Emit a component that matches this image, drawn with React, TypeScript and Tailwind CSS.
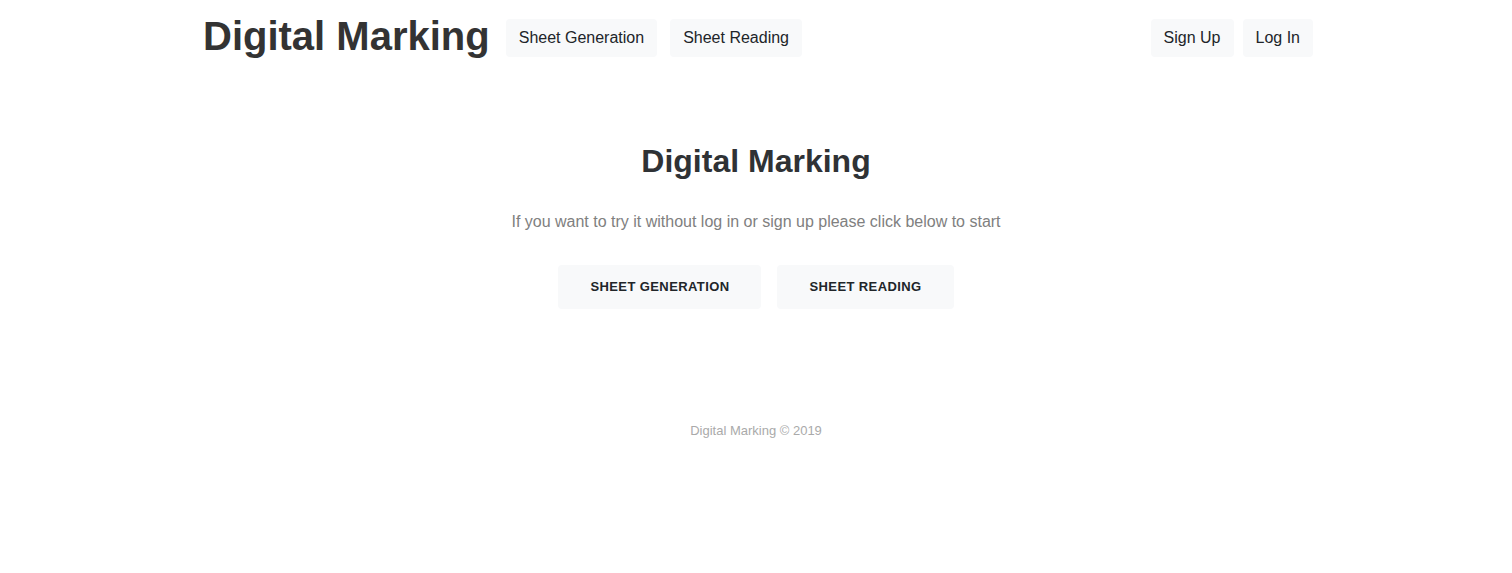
export default function App() {
  const font = { fontFamily: '"Liberation Sans", Arial, sans-serif' };
  return (
    <div className="min-h-[573px] bg-white text-[#333]" style={font}>
      <nav className="mx-auto flex h-[75px] w-[1140px] items-center px-[15px]">
        <div className="ml-[2px] flex items-center">
          <span className="-mt-[4px] text-[40px] font-bold leading-none text-[#333]">Digital Marking</span>
          <div className="ml-[16px] flex gap-[13px]">
            <button className="flex h-[38px] items-center rounded bg-[#f8f9fa] px-[13px] text-[16px] text-[#212529]">Sheet Generation</button>
            <button className="flex h-[38px] items-center rounded bg-[#f8f9fa] px-[13px] text-[16px] text-[#212529]">Sheet Reading</button>
          </div>
        </div>
        <div className="ml-auto mr-[-2px] flex gap-[9px]">
          <button className="flex h-[38px] items-center rounded bg-[#f8f9fa] px-[13px] text-[16px] text-[#212529]">Sign Up</button>
          <button className="flex h-[38px] items-center rounded bg-[#f8f9fa] px-[13px] text-[16px] text-[#212529]">Log In</button>
        </div>
      </nav>
      <main className="flex flex-col items-center pt-[66px]">
        <h1 className="text-[32px] font-bold leading-[40px] text-[#2f3235]">Digital Marking</h1>
        <p className="mt-[29px] text-[16px] leading-[24px] text-[#808080]">If you want to try it without log in or sign up please click below to start</p>
        <div className="mt-[31px] flex gap-[16px]">
          <button className="flex h-[44px] items-center rounded bg-[#f8f9fa] px-[32px] text-[13px] font-bold tracking-[0.4px] text-[#212529]">SHEET GENERATION</button>
          <button className="flex h-[44px] items-center rounded bg-[#f8f9fa] px-[32px] text-[13px] font-bold tracking-[0.4px] text-[#212529]">SHEET READING</button>
        </div>
        <footer className="mt-[112px] text-[13px] text-[#aaa]">Digital Marking © 2019</footer>
      </main>
    </div>
  );
}
